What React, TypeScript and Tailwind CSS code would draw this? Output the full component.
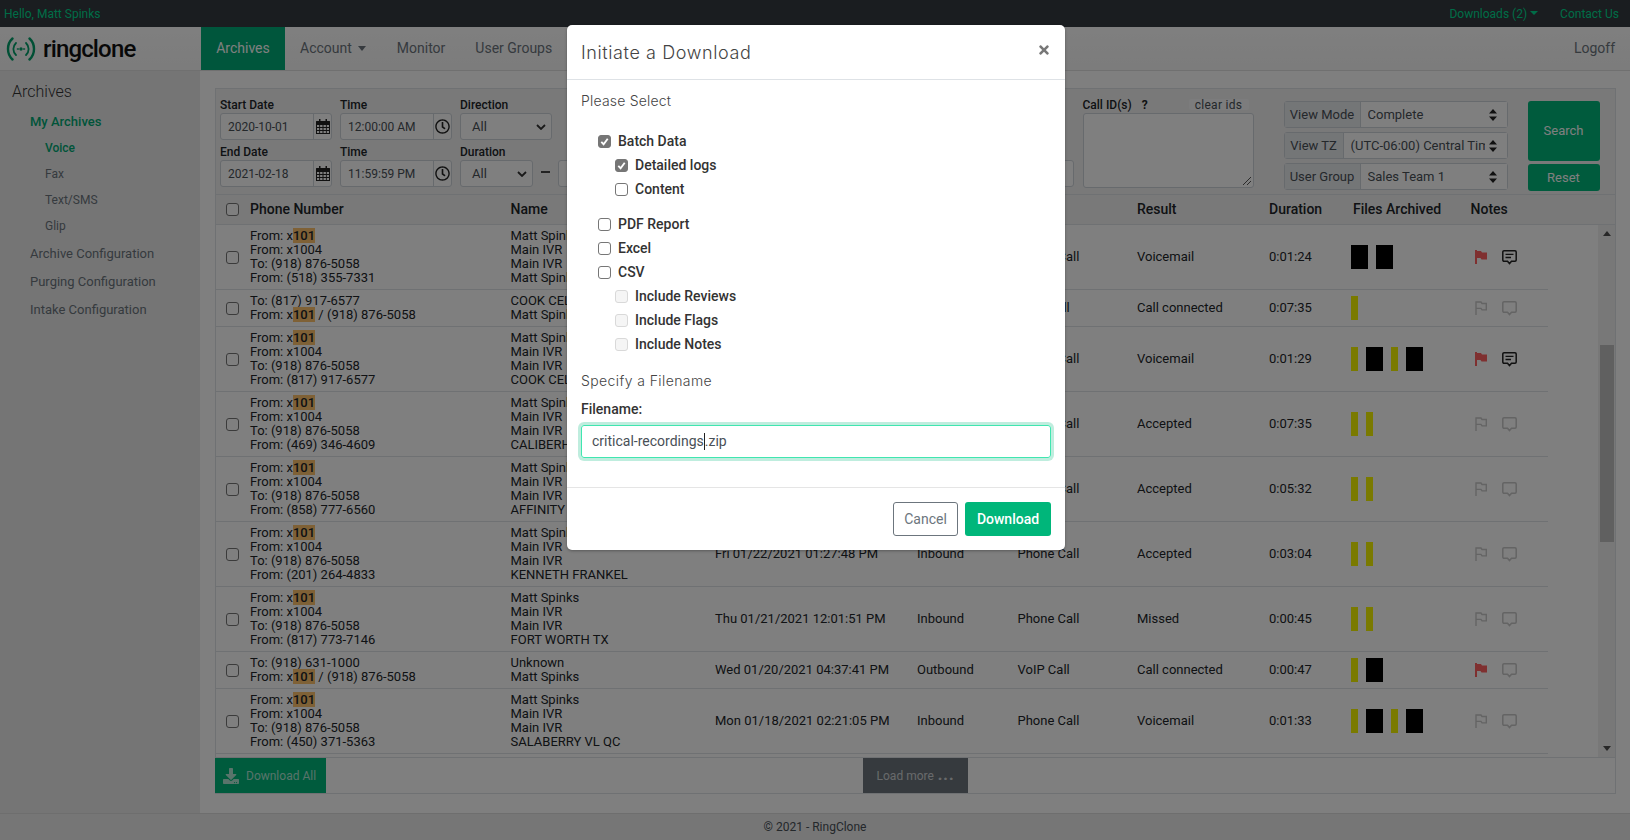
import { FaRegClock, FaDownload, FaTimes } from "react-icons/fa"

const FONT = "font-['Roboto',_'Liberation_Sans',_sans-serif]"

type Row = {
  phone: string[]
  names: string[]
  date: string
  dir: string
  type: string
  result: string
  dur: string
  files: string
  flag?: boolean
  note?: boolean
}

const rows: Row[] = [
  { phone: ["From: x101", "From: x1004", "To: (918) 876-5058", "From: (518) 355-7331"], names: ["Matt Spinks", "Main IVR", "Main IVR", "Matt Spinks"], date: "Fri 02/05/2021 04:12:09 PM", dir: "Inbound", type: "Phone Call", result: "Voicemail", dur: "0:01:24", files: "bb", flag: true, note: true },
  { phone: ["To: (817) 917-6577", "From: x101 / (918) 876-5058"], names: ["COOK CELL", "Matt Spinks"], date: "Thu 02/04/2021 10:31:17 AM", dir: "Outbound", type: "VoIP Call", result: "Call connected", dur: "0:07:35", files: "y" },
  { phone: ["From: x101", "From: x1004", "To: (918) 876-5058", "From: (817) 917-6577"], names: ["Matt Spinks", "Main IVR", "Main IVR", "COOK CELL"], date: "Thu 02/04/2021 09:02:44 AM", dir: "Inbound", type: "Phone Call", result: "Voicemail", dur: "0:01:29", files: "ybyb", flag: true, note: true },
  { phone: ["From: x101", "From: x1004", "To: (918) 876-5058", "From: (469) 346-4609"], names: ["Matt Spinks", "Main IVR", "Main IVR", "CALIBERHOME"], date: "Tue 02/02/2021 03:45:30 PM", dir: "Inbound", type: "Phone Call", result: "Accepted", dur: "0:07:35", files: "yy" },
  { phone: ["From: x101", "From: x1004", "To: (918) 876-5058", "From: (858) 777-6560"], names: ["Matt Spinks", "Main IVR", "Main IVR", "AFFINITY"], date: "Mon 01/25/2021 11:18:52 AM", dir: "Inbound", type: "Phone Call", result: "Accepted", dur: "0:05:32", files: "yy" },
  { phone: ["From: x101", "From: x1004", "To: (918) 876-5058", "From: (201) 264-4833"], names: ["Matt Spinks", "Main IVR", "Main IVR", "KENNETH FRANKEL"], date: "Fri 01/22/2021 01:27:48 PM", dir: "Inbound", type: "Phone Call", result: "Accepted", dur: "0:03:04", files: "yy" },
  { phone: ["From: x101", "From: x1004", "To: (918) 876-5058", "From: (817) 773-7146"], names: ["Matt Spinks", "Main IVR", "Main IVR", "FORT WORTH TX"], date: "Thu 01/21/2021 12:01:51 PM", dir: "Inbound", type: "Phone Call", result: "Missed", dur: "0:00:45", files: "yy" },
  { phone: ["To: (918) 631-1000", "From: x101 / (918) 876-5058"], names: ["Unknown", "Matt Spinks"], date: "Wed 01/20/2021 04:37:41 PM", dir: "Outbound", type: "VoIP Call", result: "Call connected", dur: "0:00:47", files: "yb", flag: true },
  { phone: ["From: x101", "From: x1004", "To: (918) 876-5058", "From: (450) 371-5363"], names: ["Matt Spinks", "Main IVR", "Main IVR", "SALABERRY VL QC"], date: "Mon 01/18/2021 02:21:05 PM", dir: "Inbound", type: "Phone Call", result: "Voicemail", dur: "0:01:33", files: "ybyb" },
]

function Box({ checked, disabled }: { checked?: boolean; disabled?: boolean }) {
  return (
    <span
      className={
        "flex h-[13px] w-[13px] shrink-0 items-center justify-center rounded-[3px] border " +
        (checked ? "border-[#767676] bg-[#767676]" : disabled ? "border-[#d9d9d9] bg-[#f5f5f5]" : "border-[#767676] bg-white")
      }
    >
      {checked && (
        <svg viewBox="0 0 12 12" className="h-[11px] w-[11px]">
          <path d="M2.5 6.5 5 9l4.5-6" fill="none" stroke="#fff" strokeWidth="2" />
        </svg>
      )}
    </span>
  )
}

function Calendar() {
  return (
    <svg viewBox="0 0 14 15" className="h-[15px] w-[14px] text-[#222]" fill="currentColor">
      <path fillRule="evenodd" d="M3 0h1.5v2h5V0H11v2h2.5a.5.5 0 0 1 .5.5V15H0V2.5A.5.5 0 0 1 .5 2H3V0ZM1 6v2h2.2V6H1Zm3.1 0v2h2.4V6H4.1Zm3.4 0v2h2.4V6H7.5Zm3.3 0v2H13V6h-2.2ZM1 9v2h2.2V9H1Zm3.1 0v2h2.4V9H4.1Zm3.4 0v2h2.4V9H7.5Zm3.3 0v2H13V9h-2.2ZM1 12v2h2.2v-2H1Zm3.1 0v2h2.4v-2H4.1Zm3.4 0v2h2.4v-2H7.5Zm3.3 0v2H13v-2h-2.2Z" />
    </svg>
  )
}

function FlagIcon({ filled }: { filled?: boolean }) {
  if (filled) {
    return (
      <svg viewBox="0 0 12 14" className="h-[14px] w-[12px] shrink-0 text-[#ff6060]" fill="currentColor">
        <path d="M0 0h2v1h4l1 1.5h5v7H6.5l-1-1.5H2v6H0z" />
      </svg>
    )
  }
  return (
    <svg viewBox="0 0 12 14" className="h-[14px] w-[12px] shrink-0 text-[#c8c8c8]" fill="none" stroke="currentColor" strokeWidth="1.4">
      <path d="M1 14V1h5l1 1.5h4.3v6.4H7l-1-1.5H1" />
    </svg>
  )
}

function ChatIcon({ text }: { text?: boolean }) {
  return (
    <svg viewBox="0 0 15 15" className={"h-[15px] w-[15px] shrink-0 " + (text ? "text-[#222]" : "text-[#c8c8c8]")} fill="none" stroke="currentColor" strokeWidth="1.5">
      <path d="M2 .8h11a1.2 1.2 0 0 1 1.2 1.2v8a1.2 1.2 0 0 1-1.2 1.2H9.5l-2 2.4-2-2.4H2A1.2 1.2 0 0 1 .8 10V2A1.2 1.2 0 0 1 2 .8z" />
      {text && <path d="M3.5 4.3h8M3.5 7.5h5.5" strokeWidth="1.3" />}
    </svg>
  )
}

function PickerInput({ value, kind }: { value: string; kind: "date" | "time" }) {
  return (
    <div className="flex h-[27px] w-[112px] rounded-[3px] border border-[#ced4da] bg-white">
      <div className="flex w-[93px] items-center border-r border-[#ced4da] pl-[7px] text-[12px] text-[#495057]">{value}</div>
      <div className="flex flex-1 items-center justify-center">
        {kind === "date" ? <Calendar /> : <FaRegClock className="h-[15px] w-[15px] text-[#222]" />}
      </div>
    </div>
  )
}

function Field({ label, children, w }: { label: string; children: React.ReactNode; w: string }) {
  return (
    <div className={"flex flex-col " + w}>
      <span className="mb-[1px] h-[14px] text-[12px] leading-[14px] font-medium text-[#212529]">{label}</span>
      {children}
    </div>
  )
}

function Sel({ value, w }: { value: string; w: string }) {
  return (
    <div className={"flex h-[27px] items-center justify-between rounded-[3px] border border-[#ced4da] bg-white pr-[5px] pl-[11px] text-[13px] text-[#495057] " + w}>
      {value}
      <svg viewBox="0 0 10 6" className="h-[6px] w-[10px]">
        <path d="M1 1l4 4 4-4" fill="none" stroke="#333" strokeWidth="1.8" />
      </svg>
    </div>
  )
}

function ViewSelect({ label, value, labelW }: { label: string; value: string; labelW: string }) {
  return (
    <div className="flex h-[27px] rounded-[3px] border border-[#ced4da] text-[13px] text-[#495057]">
      <div className={"flex items-center justify-center border-r border-[#ced4da] bg-[#e9ecef] " + labelW}>{label}</div>
      <div className="relative flex flex-1 items-center bg-white pl-[7px] whitespace-nowrap">
        <span className="w-[134px] overflow-hidden">{value}</span>
        <svg viewBox="0 0 8 12" className="absolute right-[10px] h-[12px] w-[8px] text-[#222]" fill="currentColor">
          <path d="M4 0l4 4.5H0zM4 12L0 7.5h8z" />
        </svg>
      </div>
    </div>
  )
}

function PhoneLine({ text }: { text: string }) {
  const i = text.indexOf("x101")
  if (i < 0) return <div>{text}</div>
  return (
    <div>
      {text.slice(0, i)}x<span className="bg-[#ffc36d] font-medium">101</span>
      {text.slice(i + 4)}
    </div>
  )
}

function TableRow({ row }: { row: Row }) {
  return (
    <div className="flex w-[1332px] items-center border-b border-[#dee2e6] py-[4px] text-[13px] leading-[14px] text-[#212529]">
      <div className="flex w-[34px] justify-center pr-[2px]">
        <Box />
      </div>
      <div className="w-[260.5px]">
        {row.phone.map((p) => (
          <PhoneLine key={p} text={p} />
        ))}
      </div>
      <div className="w-[204.5px] whitespace-nowrap">
        {row.names.map((n, i) => (
          <div key={i}>{n}</div>
        ))}
      </div>
      <div className="w-[202px]">{row.date}</div>
      <div className="w-[100.5px]">{row.dir}</div>
      <div className="w-[119.5px]">{row.type}</div>
      <div className="w-[132px]">{row.result}</div>
      <div className="w-[82px]">{row.dur}</div>
      <div className="flex h-[24px] w-[124px] gap-[8px]">
        {row.files.split("").map((f, i) => (
          <div key={i} className={f === "y" ? "h-full w-[7px] bg-[#f4f400]" : "h-full w-[17px] bg-black"} />
        ))}
      </div>
      <div className="flex items-center gap-[15px]">
        <FlagIcon filled={row.flag} />
        <ChatIcon text={row.note} />
      </div>
    </div>
  )
}

function Check({ label, checked, disabled, sub }: { label: string; checked?: boolean; disabled?: boolean; sub?: boolean }) {
  return (
    <div className={"flex h-[24px] items-center text-[14px] font-medium text-[#333] " + (sub ? "pl-[17px]" : "")}>
      <Box checked={checked} disabled={disabled} />
      <span className="ml-[7px]">{label}</span>
    </div>
  )
}

export default function App() {
  return (
    <div className={"relative flex h-[840px] w-[1630px] flex-col overflow-hidden bg-white " + FONT}>
      <div className="flex h-[27px] items-center justify-between bg-[#343a40] pr-[11px] pl-[4px] text-[12px] text-[#00d98f]">
        <span>Hello, Matt Spinks</span>
        <div className="flex items-center gap-[22px]">
          <span className="flex items-center gap-[3px]">
            Downloads (2)
            <span className="mt-[-2px] border-x-[4px] border-t-[4px] border-x-transparent border-t-[#00d98f]" />
          </span>
          <span>Contact Us</span>
        </div>
      </div>

      <div className="flex h-[44px] items-stretch border-b border-[#e0e0e0] bg-gradient-to-b from-white to-[#f8f8f8] pr-[15px] text-[14px] text-[#6c757d]">
        <div className="flex w-[201px] items-center pl-[6px]">
          <svg viewBox="0 0 30 24" className="h-[24px] w-[30px]" fill="none" stroke="#00a06a" strokeLinecap="round">
            <path d="M6.500 1.500C.5 7 .5 17 6.500 22.500M23.500 1.500c6 5.500 6 15.500 0 21" strokeWidth="2.400" />
            <path d="M10 6c-3.500 3.500-3.500 8.500 0 12M20 6c3.500 3.500 3.500 8.500 0 12" strokeWidth="1.800" />
            <path d="M11.500 12h.8M17.700 12h.8" strokeWidth="1.600" />
            <circle cx="15" cy="12" r="1.700" fill="#00a06a" stroke="none" />
          </svg>
          <span className="ml-[7px] text-[24px] leading-none font-medium tracking-[-0.85px] text-[#111]">ringclone</span>
        </div>
        <div className="flex w-[84px] items-center justify-center bg-[#00ad78] text-white">Archives</div>
        <div className="ml-[15px] flex items-center gap-[6px]">
          Account
          <span className="border-x-[4px] border-t-[5px] border-x-transparent border-t-[#6c757d]" />
        </div>
        <div className="ml-[31px] flex items-center">Monitor</div>
        <div className="ml-[30px] flex items-center">User Groups</div>
        <div className="ml-auto flex items-center">Logoff</div>
      </div>

      <div className="flex flex-1 overflow-hidden">
        <aside className="w-[200px] shrink-0 bg-[#ebebeb] pl-[12px] text-[13px] text-[#6c757d]">
          <div className="mt-[10px] h-[22px] text-[16px] leading-[22px] font-light text-[#333]">Archives</div>
          <div className="mt-[6px] ml-[18px] h-[26px] leading-[26px] font-medium text-[#00a874]">My Archives</div>
          <div className="ml-[33px] h-[26px] text-[12px] leading-[26px] font-medium text-[#00a874]">Voice</div>
          <div className="ml-[33px] h-[26px] text-[12px] leading-[26px]">Fax</div>
          <div className="ml-[33px] h-[26px] text-[12px] leading-[26px]">Text/SMS</div>
          <div className="ml-[33px] h-[26px] text-[12px] leading-[26px]">Glip</div>
          <div className="mt-[1px] ml-[18px] h-[28px] leading-[28px]">Archive Configuration</div>
          <div className="ml-[18px] h-[28px] leading-[28px]">Purging Configuration</div>
          <div className="ml-[18px] h-[28px] leading-[28px]">Intake Configuration</div>
        </aside>

        <main className="flex min-w-0 flex-1 flex-col pt-[17px] pl-[15px]">
          <div className="w-[1401px] border border-[#dee2e6]">
            <div className="flex h-[106px] border-b border-[#dee2e6] bg-[#f3f3f3] pl-[4px]">
              <div className="mt-[9px] flex w-[854.5px] shrink-0 flex-col gap-[5px]">
                <div className="flex gap-[8px]">
                  <Field label="Start Date" w="w-[112px]"><PickerInput value="2020-10-01" kind="date" /></Field>
                  <Field label="Time" w="w-[112px]"><PickerInput value="12:00:00 AM" kind="time" /></Field>
                  <Field label="Direction" w="w-[92px]"><Sel value="All" w="w-[92px]" /></Field>
                </div>
                <div className="flex gap-[8px]">
                  <Field label="End Date" w="w-[112px]"><PickerInput value="2021-02-18" kind="date" /></Field>
                  <Field label="Time" w="w-[112px]"><PickerInput value="11:59:59 PM" kind="time" /></Field>
                  <Field label="Duration" w="w-[73px]"><Sel value="All" w="w-[73px]" /></Field>
                  <span className="mt-[26px] h-[2px] w-[9px] bg-[#444]" />
                  <div className="mt-[15px] h-[27px] w-[516px] rounded-[3px] border border-[#ced4da] bg-white" />
                </div>
              </div>

              <div className="relative mt-[9px] ml-[8px] w-[171px] shrink-0">
                <div className="flex h-[15px] items-start text-[12px] leading-[14px] font-medium text-[#212529]">
                  Call ID(s)
                  <span className="ml-[10px] font-bold">?</span>
                  <span className="absolute top-[1px] right-[5px] flex h-[11px] w-[60px] items-center justify-center rounded-[2px] bg-[#f8f9fa] text-[12px] font-normal tracking-[0.3px] text-[#495057]">clear ids</span>
                </div>
                <div className="relative h-[75px] rounded-[3px] border border-[#ced4da] bg-white">
                  <svg viewBox="0 0 10 10" className="absolute right-[1px] bottom-[1px] h-[10px] w-[10px]">
                    <path d="M9 1 1 9M9 5 5 9" stroke="#555" strokeWidth="1" />
                  </svg>
                </div>
              </div>

              <div className="mt-[12px] ml-[30px] flex w-[224px] shrink-0 flex-col gap-[4px]">
                <ViewSelect label="View Mode" value="Complete" labelW="w-[76px]" />
                <ViewSelect label="View TZ" value="(UTC-06:00) Central Time" labelW="w-[59px]" />
                <ViewSelect label="User Group" value="Sales Team 1" labelW="w-[76px]" />
              </div>

              <div className="mt-[12px] ml-[20px] flex w-[72px] shrink-0 flex-col gap-[3px] text-[13px] text-white">
                <div className="flex h-[60px] items-center justify-center rounded-[3px] bg-[#00b67a]">Search</div>
                <div className="flex h-[27px] items-center justify-center rounded-[3px] bg-[#00b67a]">Reset</div>
              </div>
            </div>

            <div className="flex h-[30px] items-center border-b border-[#dee2e6] bg-[#f3f3f3] text-[14px] font-medium text-[#212529]">
              <div className="flex w-[34px] justify-center pr-[2px]"><Box /></div>
              <div className="w-[260.5px]">Phone Number</div>
              <div className="w-[626.5px]">Name</div>
              <div className="w-[132px]">Result</div>
              <div className="w-[84px]">Duration</div>
              <div className="w-[117.5px]">Files Archived</div>
              <div>Notes</div>
            </div>

            <div className="relative h-[533px] overflow-hidden border-b border-[#dee2e6]">
              {rows.map((r, i) => (
                <TableRow key={i} row={r} />
              ))}
              <div className="absolute top-0 right-0 flex h-full w-[17px] flex-col bg-[#f1f1f1]">
                <div className="flex h-[17px] items-center justify-center">
                  <span className="border-x-[4px] border-b-[5px] border-x-transparent border-b-[#505050]" />
                </div>
                <div className="mt-[103px] h-[197px] w-[14px] self-center bg-[#c1c1c1]" />
                <div className="mt-auto flex h-[17px] items-center justify-center">
                  <span className="border-x-[4px] border-t-[5px] border-x-transparent border-t-[#505050]" />
                </div>
              </div>
            </div>

            <div className="relative flex h-[35px] items-stretch text-[12px] text-white">
              <div className="-ml-px flex w-[111px] items-center gap-[7px] bg-[#00b67a] pl-[8px]">
                <FaDownload className="h-[16px] w-[16px] text-white/70" />
                <span className="text-white/70">Download All</span>
              </div>
              <div className="ml-[537px] flex w-[105px] items-center justify-center bg-[#6c757d] text-white/70">
                Load more <span className="ml-[4px] text-[15px] leading-none font-black tracking-[1px]">...</span>
              </div>
            </div>
          </div>
        </main>
      </div>

      <div className="flex h-[27px] items-center justify-center border-t border-[#ddd] bg-[#ececec] text-[12px] text-[#495057]">© 2021 - RingClone</div>

      <div className="absolute inset-0 bg-black/50" />

      <div className="absolute top-[25px] left-[567px] flex h-[525px] w-[498px] flex-col rounded-[5px] bg-white text-[#212529] shadow-[0_1px_3px_rgba(0,0,0,0.3)]">
        <div className="flex h-[55px] items-center justify-between border-b border-[#dee2e6] px-[14px]">
          <span className="font-['Inter',_sans-serif] text-[18px] font-light tracking-[0.6px] text-[#444]">Initiate a Download</span>
          <FaTimes className="mt-[-4px] h-[14px] w-[14px] text-[#777]" />
        </div>
        <div className="flex-1 px-[14px]">
          <div className="mt-[11px] font-['Inter',_sans-serif] text-[14px] leading-[20px] font-light tracking-[0.2px] text-[#444]">Please Select</div>
          <div className="mt-[18px] pl-[17px]">
            <Check label="Batch Data" checked />
            <Check label="Detailed logs" checked sub />
            <Check label="Content" sub />
            <div className="h-[11px]" />
            <Check label="PDF Report" />
            <Check label="Excel" />
            <Check label="CSV" />
            <Check label="Include Reviews" disabled sub />
            <Check label="Include Flags" disabled sub />
            <Check label="Include Notes" disabled sub />
          </div>
          <div className="mt-[15px] font-['Inter',_sans-serif] text-[14px] leading-[20px] font-light tracking-[0.4px] text-[#444]">Specify a Filename</div>
          <div className="mt-[8px] text-[14px] leading-[20px] font-medium text-[#333]">Filename:</div>
          <div className="mt-[6px] flex h-[33px] items-center rounded-[3px] border border-[#40e6b0] pl-[10px] text-[14px] text-[#495057] shadow-[0_0_0_3px_rgba(0,182,122,0.25)]">
            critical-recordings<span className="inline-block h-[17px] w-px bg-[#222]" />.zip
          </div>
        </div>
        <div className="flex h-[63px] items-center justify-end gap-[7px] border-t border-[#e5e5e5] pr-[14px]">
          <div className="flex h-[34px] w-[65px] items-center justify-center rounded-[3px] border border-[#6c757d] text-[14px] text-[#6c757d]">Cancel</div>
          <div className="flex h-[34px] w-[86px] items-center justify-center rounded-[3px] bg-[#00b67a] text-[14px] font-medium text-white">Download</div>
        </div>
      </div>
    </div>
  )
}
